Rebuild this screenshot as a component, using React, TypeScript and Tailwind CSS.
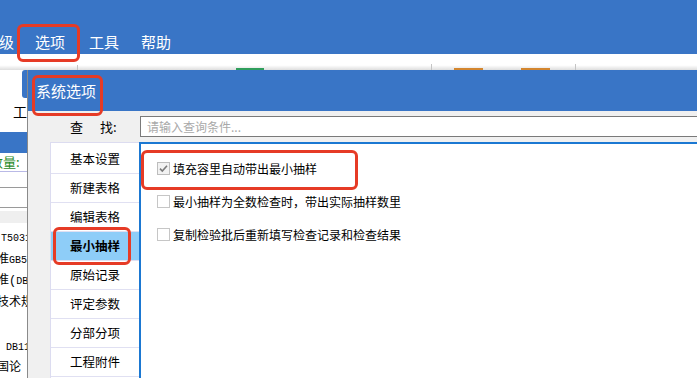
import React from "react";

const navItems = ["基本设置", "新建表格", "编辑表格", "最小抽样", "原始记录", "评定参数", "分部分项", "工程附件"];

function CheckBox({ checked }: { checked: boolean }) {
  return (
    <div
      className={
        "w-[13px] h-[13px] border flex items-center justify-center shrink-0 " +
        (checked ? "border-[#bdbdbd] bg-[#f2f2f2]" : "border-[#c6c6c6] bg-white")
      }
    >
      {checked && (
        <svg width="11" height="11" viewBox="0 0 11 11">
          <path d="M2 5.6 L4.3 8 L9 2.8" fill="none" stroke="#7a7a7a" strokeWidth="1.6" />
        </svg>
      )}
    </div>
  );
}

export default function App() {
  return (
    <div className="relative w-[697px] h-[378px] overflow-hidden bg-white font-['Noto_Sans_CJK_SC',sans-serif]">
      {/* Menu bar */}
      <div className="h-[54px] bg-[#3975c6] flex items-start pt-[32px] text-white text-[15px] leading-[20px]">
        <span className="ml-[-1px]">级</span>
        <span className="ml-[21px]">选项</span>
        <span className="ml-[24px]">工具</span>
        <span className="ml-[22px]">帮助</span>
      </div>

      {/* Toolbar strip */}
      <div className="h-[16px] bg-linear-to-b from-white from-[70%] to-[#dedede] flex items-end">
        <div className="ml-[77px] w-px h-[5px] bg-[#c4c4c4]" />
        <div className="ml-[158px] w-[28px] h-[2px] bg-[#2f9e5c]" />
        <div className="ml-[167px] w-px h-[6px] bg-[#c4c4c4]" />
        <div className="ml-[22px] w-[29px] h-[2px] bg-[#d3862f]" />
        <div className="ml-[38px] w-[29px] h-[2px] bg-[#d3862f]" />
        <div className="ml-[25px] w-px h-[6px] bg-[#c4c4c4]" />
      </div>

      {/* Background main window (left visible strip) */}
      <div className="w-[200px] flex flex-col">
        <div className="h-[28px]">
          <div className="ml-[22px] w-[28px] h-[28px] bg-[#3975c6] rounded-[3px]" />
        </div>
        <div className="h-[22px] mt-[2px] pl-[13px] text-[14px] leading-[22px] text-black">工程</div>
        <div className="h-[10px]" />
        <div className="h-[21px] bg-[#3975c6]" />
        <div className="h-[19px] border-b border-[#b9b9e6] text-[13px] leading-[18px] text-[#1f8a1f] ml-[-10px]">数量:</div>
        <div className="h-[16px] border-b border-[#9a9a9a]" />
        <div className="h-[20px] border-b border-[#9a9a9a]" />
        <div className="h-[12px] bg-[#efefef] mt-[3px]" />
        <div className="pt-[5px] text-[12px] leading-[21.7px] text-black font-['Liberation_Mono','Noto_Sans_CJK_SC',monospace]">
          <div className="pl-[1px]"><span className="text-[10px]">T5031</span></div>
          <div className="ml-[-3px]">准<span className="text-[10px]">GB5</span></div>
          <div className="ml-[-3px]">准(<span className="text-[10px]">DB</span></div>
          <div className="ml-[-3px]">技术规</div>
          <div>&nbsp;</div>
          <div className="pl-[6px]"><span className="text-[10px]">DB11</span></div>
          <div className="ml-[-3px]">国论</div>
        </div>
      </div>

      {/* Dialog */}
      <div className="absolute left-[27px] top-[70px] w-[700px] h-[320px] bg-[#f0f0f0] border-l border-[#8a8a8a] flex flex-col">
        <div className="h-[41px] bg-[#3975c6] flex items-center pl-[8px] text-white text-[15px] leading-[20px]">
          系统选项
        </div>
        <div className="h-[31px] flex items-start pt-[5px]">
          <div className="w-[112px] pl-[42px] h-[21px] flex items-center text-[13px] leading-[20px] text-black">
            <span>查</span>
            <span className="ml-[17px]">找:</span>
          </div>
          <div className="flex-1 h-[21px] border border-[#7a7a7a] bg-white flex items-center pl-[6px] text-[12px] leading-[18px] text-[#a9a9a9]">
            请输入查询条件...
          </div>
        </div>
        <div className="flex-1 flex">
          <div className="ml-[22px] w-[89px] bg-white border-l border-t border-[#dcdcf0] pt-[2px] flex flex-col">
            {navItems.map((t) => (
              <div
                key={t}
                className={
                  "h-[29px] border-b border-[#e0e0f2] flex items-center justify-center text-[12.5px] leading-[18px] text-black " +
                  (t === "最小抽样" ? "bg-[#8ecdf8] font-bold" : "")
                }
              >
                {t}
              </div>
            ))}
          </div>
          <div className="flex-1 bg-white border-l-2 border-t-2 border-[#1b78d2] pt-[8px] pl-[16px] flex flex-col">
            {[
              { t: "填充容里自动带出最小抽样", c: true },
              { t: "最小抽样为全数检查时，带出实际抽样数里", c: false },
              { t: "复制检验批后重新填写检查记录和检查结果", c: false },
            ].map((r) => (
              <div key={r.t} className="h-[33px] flex items-center">
                <CheckBox checked={r.c} />
                <span className="ml-[3px] text-[12px] leading-[18px] text-black">{r.t}</span>
              </div>
            ))}
          </div>
        </div>
      </div>

      {/* Red annotation boxes */}
      <div className="absolute left-[17px] top-[24px] w-[63px] h-[38px] border-[3px] border-[#e63b26] rounded-[6px]" />
      <div className="absolute left-[32px] top-[75px] w-[71px] h-[41px] border-[3px] border-[#e63b26] rounded-[6px]" />
      <div className="absolute left-[53px] top-[227px] w-[78px] h-[38px] border-[3px] border-[#e63b26] rounded-[6px]" />
      <div className="absolute left-[141px] top-[150px] w-[217px] h-[40px] border-[3px] border-[#e63b26] rounded-[6px]" />
    </div>
  );
}
